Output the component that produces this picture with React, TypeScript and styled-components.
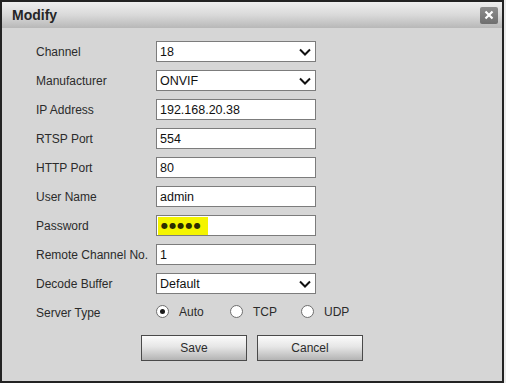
import React from "react";
import styled, { createGlobalStyle } from "styled-components";

const Global = createGlobalStyle`
  html, body { margin: 0; padding: 0; }
  body {
    background: #ececec;
    width: 506px;
    height: 383px;
    overflow: hidden;
    font-family: "Liberation Sans", Arial, sans-serif;
  }
`;

const Dialog = styled.div`
  box-sizing: border-box;
  width: 504px;
  height: 383px;
  border: 2px solid #232323;
  background: #d6d6d6;
  display: flex;
  flex-direction: column;
`;

const TitleBar = styled.div`
  height: 26px;
  flex: none;
  display: flex;
  align-items: center;
  justify-content: space-between;
  padding: 0 4px 0 10px;
  background: linear-gradient(#efefef, #d9d9d9 50%, #b8b8b8);
`;

const Title = styled.span`
  font-size: 14px;
  font-weight: bold;
  color: #262626;
`;

const CloseButton = styled.div`
  width: 18px;
  height: 17px;
  border-radius: 2px;
  background: linear-gradient(#8e8e8e, #6f6f6f);
  display: flex;
  align-items: center;
  justify-content: center;
`;

const Body = styled.div`
  padding: 13px 0 0 34px;
  display: flex;
  flex-direction: column;
`;

const Form = styled.div`
  display: grid;
  grid-template-columns: 120px 160px;
  grid-auto-rows: 21px;
  row-gap: 8px;
  align-items: center;
`;

const Label = styled.span`
  font-size: 12px;
  color: #2b2b2b;
`;

const Field = styled.div`
  box-sizing: border-box;
  height: 21px;
  background: #fff;
  border: 1px solid #7c7c7c;
  display: flex;
  align-items: center;
  justify-content: space-between;
  padding: 0 4px 0 3px;
  font-size: 12.5px;
  color: #111;
`;

const Highlight = styled.span`
  background: #f4f400;
  margin-left: -2px;
  height: 18px;
  width: 50px;
  box-sizing: border-box;
  padding-left: 3px;
  display: flex;
  align-items: center;
  color: #2c2c00;
  font-family: "DejaVu Sans", sans-serif;
  font-size: 8px;
  letter-spacing: 1.2px;
`;

const RadioGroup = styled.div`
  display: flex;
  align-items: center;
  width: max-content;
  margin-top: -2px;
  font-size: 12px;
  color: #2b2b2b;
`;

const Option = styled.div<{ $w?: number }>`
  flex: none;
  display: flex;
  align-items: center;
  gap: 10px;
  width: ${(p) => (p.$w ? `${p.$w}px` : "auto")};
`;

const Radio = styled.span<{ $checked?: boolean }>`
  box-sizing: border-box;
  width: 13px;
  height: 13px;
  border-radius: 50%;
  border: 1px solid #6e6e6e;
  background: #fff;
  display: flex;
  align-items: center;
  justify-content: center;
  &::after {
    content: "";
    width: 5px;
    height: 5px;
    border-radius: 50%;
    background: ${(p) => (p.$checked ? "#1a1a1a" : "transparent")};
  }
`;

const Buttons = styled.div`
  display: flex;
  justify-content: center;
  gap: 10px;
  margin: 12px 0 0 -34px;
`;

const Button = styled.div`
  box-sizing: border-box;
  width: 106px;
  height: 26px;
  border: 1px solid #4a4a4a;
  background: linear-gradient(#fbfbfb, #e6e6e6 45%, #b4b4b4);
  display: flex;
  align-items: center;
  justify-content: center;
  font-size: 12px;
  color: #2b2b2b;
`;

const Chevron = () => (
  <svg width="12" height="8" viewBox="0 0 12 8">
    <path d="M1 1.5 L6 6.5 L11 1.5" fill="none" stroke="#111" strokeWidth="2" />
  </svg>
);

const CloseX = () => (
  <svg width="10" height="10" viewBox="0 0 10 10">
    <path d="M1.5 1.5 L8.5 8.5 M8.5 1.5 L1.5 8.5" stroke="#fff" strokeWidth="2.2" />
  </svg>
);

const rows: { label: string; value: string; select?: boolean }[] = [
  { label: "Channel", value: "18", select: true },
  { label: "Manufacturer", value: "ONVIF", select: true },
  { label: "IP Address", value: "192.168.20.38" },
  { label: "RTSP Port", value: "554" },
  { label: "HTTP Port", value: "80" },
  { label: "User Name", value: "admin" },
];

export default function App() {
  return (
    <>
      <Global />
      <Dialog>
        <TitleBar>
          <Title>Modify</Title>
          <CloseButton>
            <CloseX />
          </CloseButton>
        </TitleBar>
        <Body>
          <Form>
            {rows.map((r) => (
              <React.Fragment key={r.label}>
                <Label>{r.label}</Label>
                <Field>
                  <span>{r.value}</span>
                  {r.select && <Chevron />}
                </Field>
              </React.Fragment>
            ))}
            <Label>Password</Label>
            <Field>
              <Highlight>●●●●●</Highlight>
            </Field>
            <Label>Remote Channel No.</Label>
            <Field>
              <span>1</span>
            </Field>
            <Label>Decode Buffer</Label>
            <Field>
              <span>Default</span>
              <Chevron />
            </Field>
            <Label>Server Type</Label>
            <RadioGroup>
              <Option $w={74}>
                <Radio $checked />
                <span>Auto</span>
              </Option>
              <Option $w={71}>
                <Radio />
                <span>TCP</span>
              </Option>
              <Option>
                <Radio />
                <span>UDP</span>
              </Option>
            </RadioGroup>
          </Form>
          <Buttons>
            <Button>Save</Button>
            <Button>Cancel</Button>
          </Buttons>
        </Body>
      </Dialog>
    </>
  );
}
